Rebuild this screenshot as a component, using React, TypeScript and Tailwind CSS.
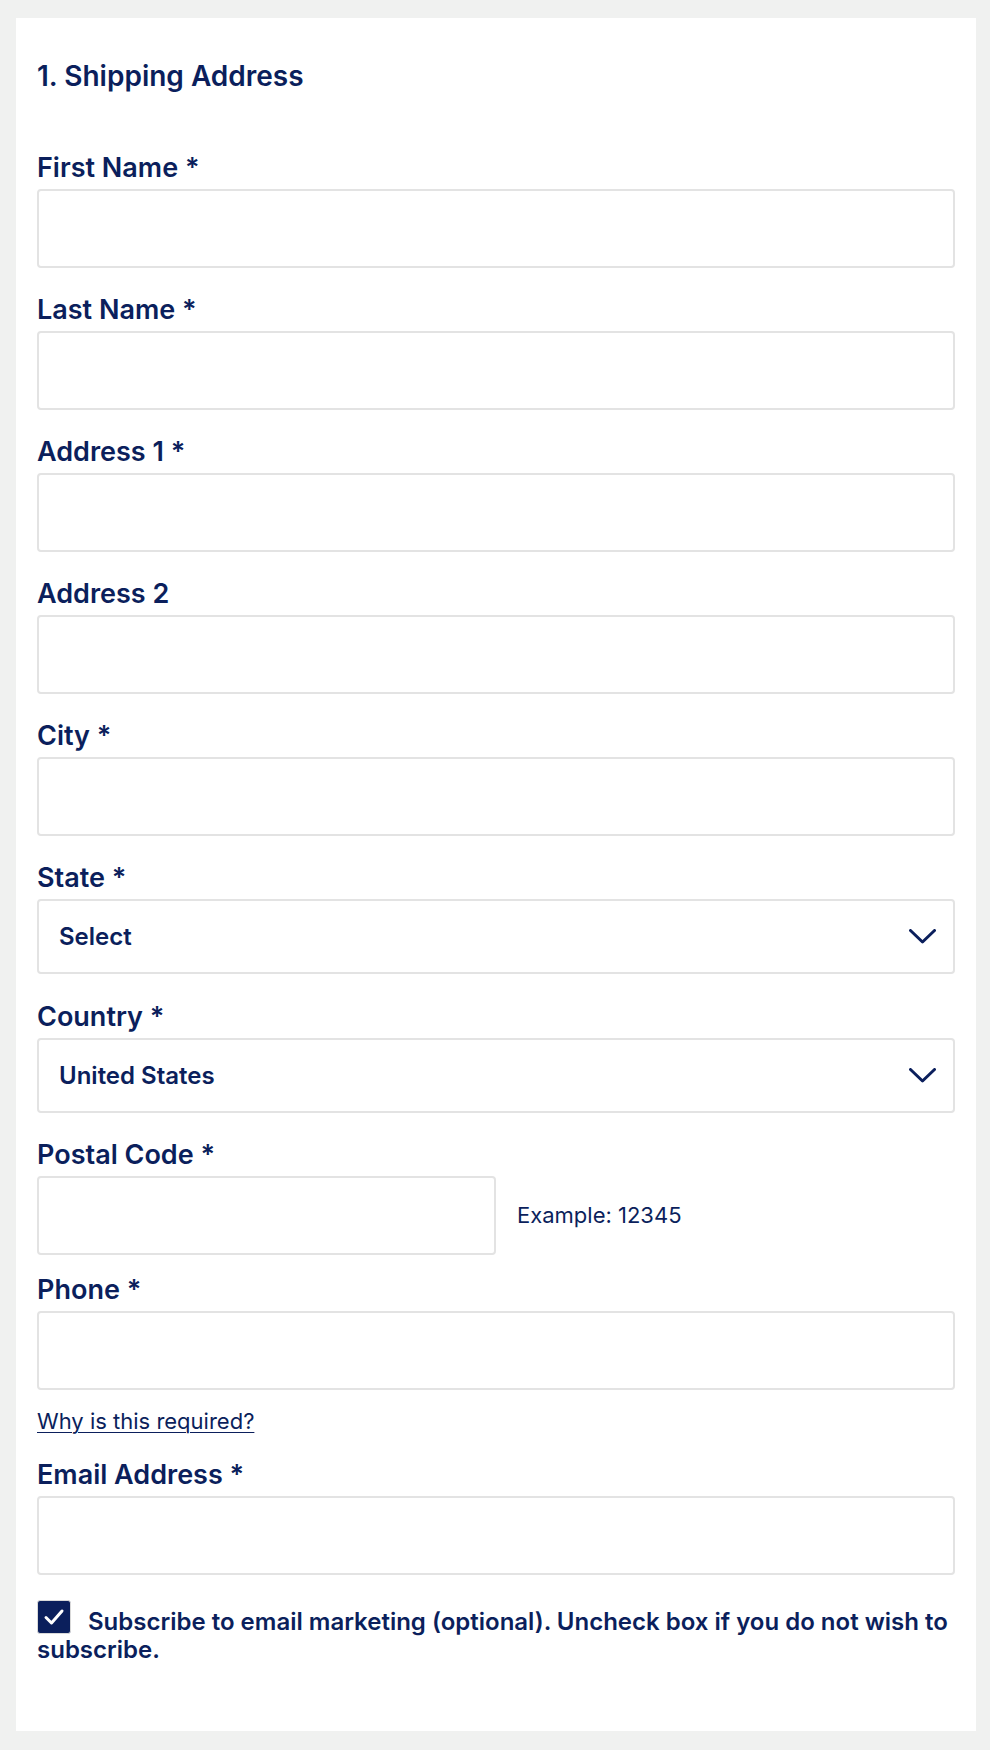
import React from "react";

const Chevron = () => (
  <svg width="27" height="15" viewBox="0 0 27 15" fill="none">
    <polyline
      points="1.5,1.5 13.5,13 25.5,1.5"
      stroke="#0b1f5c"
      strokeWidth="3"
      strokeLinecap="round"
      strokeLinejoin="round"
    />
  </svg>
);

const Label = ({ text }: { text: string }) => (
  <label className="block text-[27px] leading-[30px] font-semibold">{text}</label>
);

const TextBox = () => (
  <input
    type="text"
    className="mt-[6px] block h-[79px] w-full rounded-[4px] border-2 border-[#e3e3e3] bg-white outline-none"
  />
);

const SelectBox = ({ value }: { value: string }) => (
  <div className="mt-[6px] flex h-[75px] w-full items-center justify-between rounded-[4px] border-2 border-[#e3e3e3] bg-white pl-[20px] pr-[17px]">
    <span className="text-[24px] font-semibold">{value}</span>
    <Chevron />
  </div>
);

export default function App() {
  return (
    <div
      className="min-h-[1750px] bg-[#f0f1f0] pt-[18px] pb-[20px] text-[#0b1f5c]"
      style={{ fontFamily: "Inter, 'Liberation Sans', sans-serif" }}
    >
      <div className="ml-[16px] w-[960px] bg-white px-[21px] pt-[41px] pb-[67px]">
        <h2 className="text-[28px] leading-[34px] font-semibold">1. Shipping Address</h2>

        <div className="mt-[60px]">
          <Label text="First Name *" />
          <TextBox />
        </div>
        <div className="mt-[27px]">
          <Label text="Last Name *" />
          <TextBox />
        </div>
        <div className="mt-[27px]">
          <Label text="Address 1 *" />
          <TextBox />
        </div>
        <div className="mt-[27px]">
          <Label text="Address 2" />
          <TextBox />
        </div>
        <div className="mt-[27px]">
          <Label text="City *" />
          <TextBox />
        </div>
        <div className="mt-[27px]">
          <Label text="State *" />
          <SelectBox value="Select" />
        </div>
        <div className="mt-[28px]">
          <Label text="Country *" />
          <SelectBox value="United States" />
        </div>
        <div className="mt-[27px]">
          <Label text="Postal Code *" />
          <div className="mt-[6px] flex items-center gap-[21px]">
            <input
              type="text"
              className="block h-[79px] w-[459px] rounded-[4px] border-2 border-[#e3e3e3] bg-white outline-none"
            />
            <span className="text-[22px]">Example: 12345</span>
          </div>
        </div>
        <div className="mt-[20px]">
          <Label text="Phone *" />
          <TextBox />
        </div>
        <a
          href="#"
          className="mt-[17px] inline-block text-[22px] leading-[28px] underline decoration-1 underline-offset-[3px]"
        >
          Why is this required?
        </a>
        <div className="mt-[25px]">
          <Label text="Email Address *" />
          <TextBox />
        </div>

        <p className="mt-[33px] text-[24px] leading-[28px] font-semibold">
          <span className="float-left mt-[-8px] mr-[17px] flex h-[34px] w-[34px] items-center justify-center rounded-[3px] border border-[#d9d9d9] bg-[#0b1f5c]">
            <svg width="22" height="18" viewBox="0 0 22 18" fill="none">
              <polyline
                points="3,9.5 8.5,15 19,3"
                stroke="#ffffff"
                strokeWidth="3"
                strokeLinecap="round"
                strokeLinejoin="round"
              />
            </svg>
          </span>
          Subscribe to email marketing (optional). Uncheck box if you do not wish to subscribe.
        </p>
      </div>
    </div>
  );
}
